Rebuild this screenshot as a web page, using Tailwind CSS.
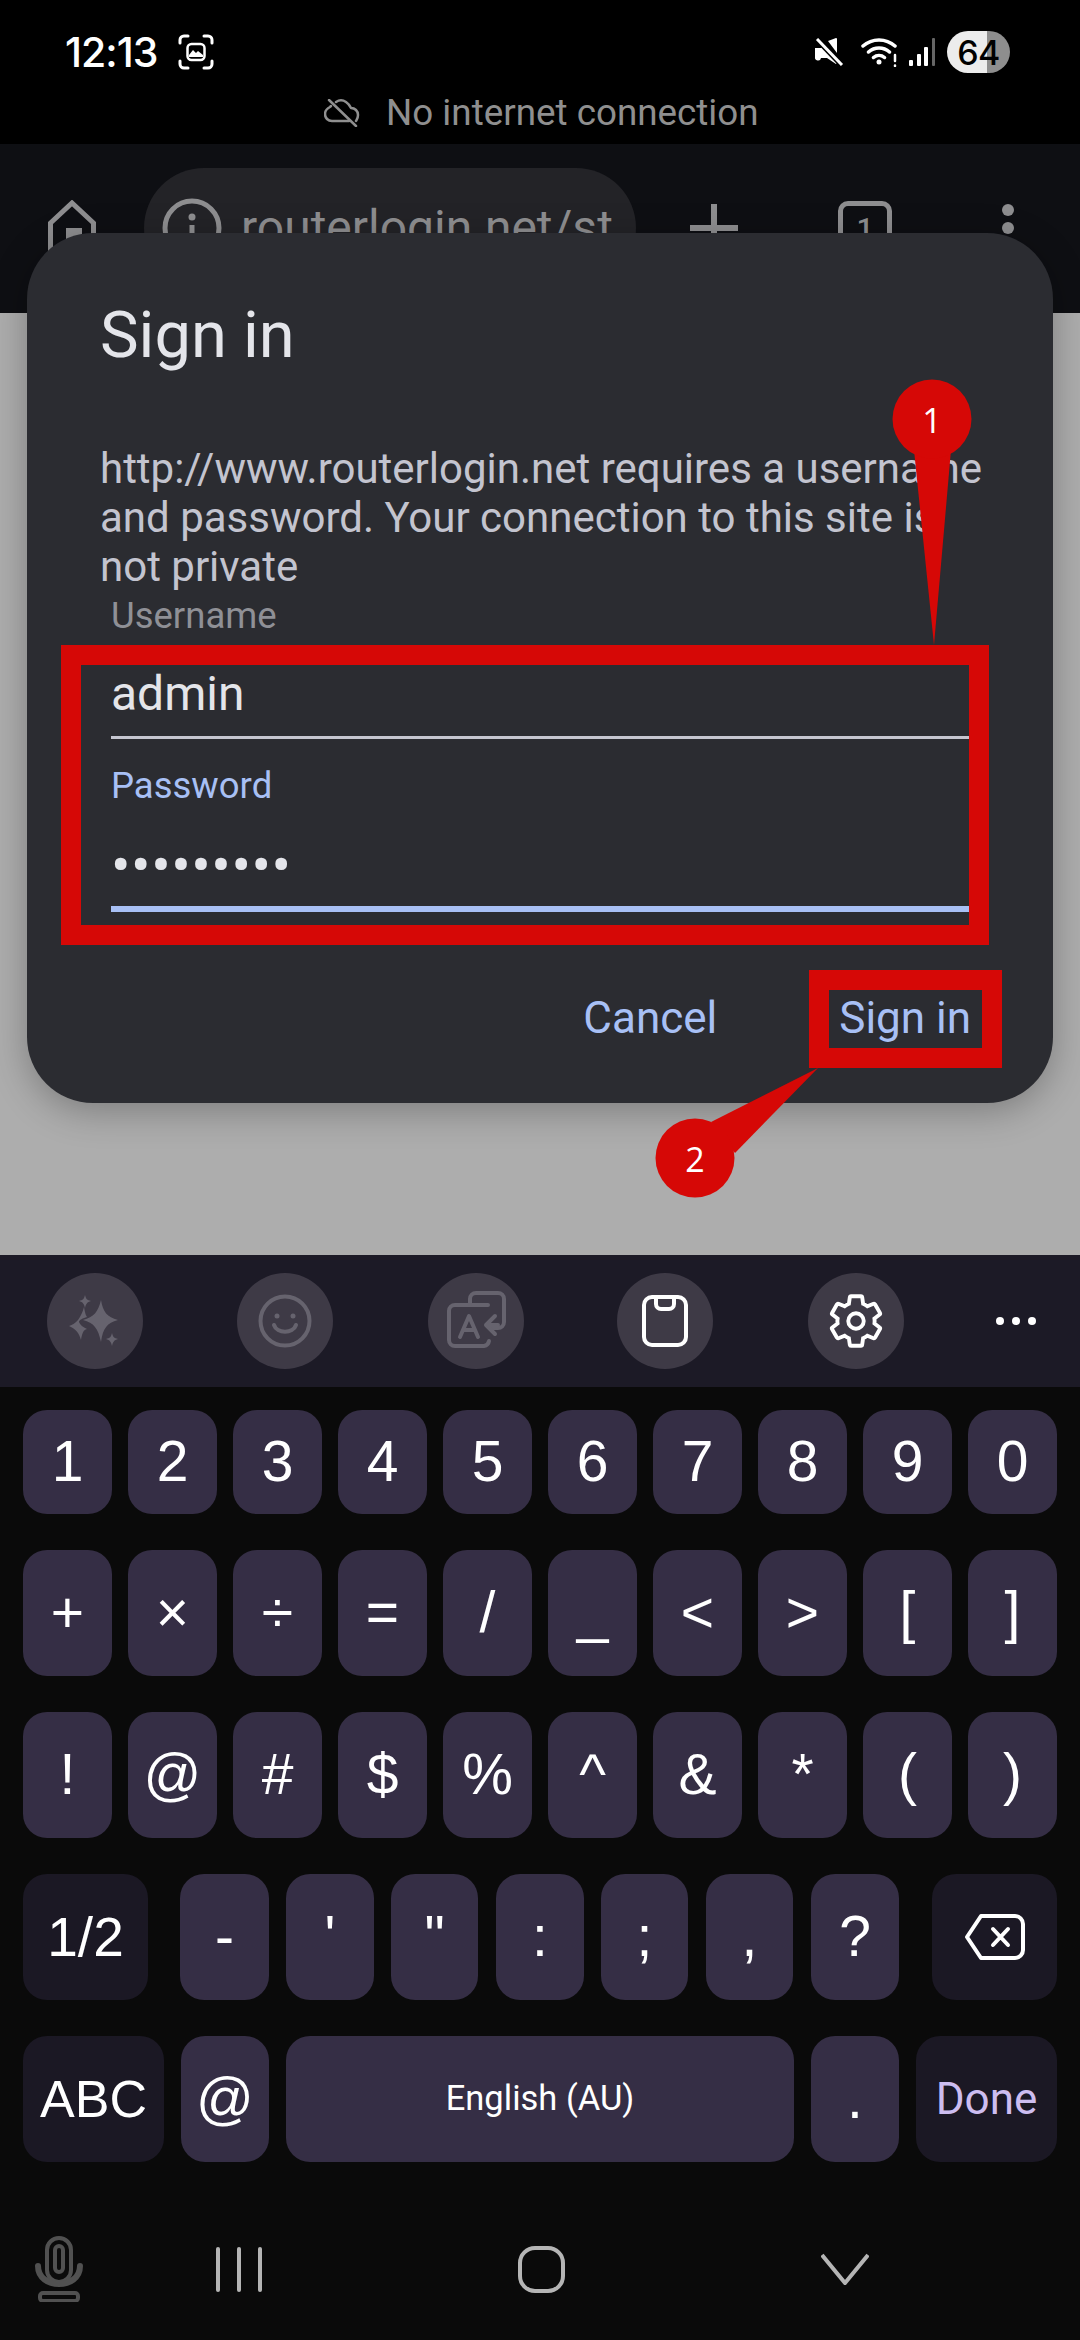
<!DOCTYPE html>
<html lang="en">
<head>
  <meta charset="UTF-8">
  <meta name="viewport" content="width=device-width, initial-scale=1.0">
  <title>Router sign in</title>
  <script src="https://cdn.jsdelivr.net/npm/@tailwindcss/browser@4"></script>
</head>
<body class="bg-black">
<div class="relative w-[1080px] h-[2340px] overflow-hidden flex flex-col font-['Roboto',sans-serif]">

  <!-- status bar -->
  <div class="h-[144px] bg-black pt-[31px]">
    <div class="h-[42px] pl-[65px] pr-[70px] flex items-center text-white">
      <span class="text-[41px] leading-[42px] font-medium font-['Inter',sans-serif] tracking-[-1px]">12:13</span>
      <svg class="ml-[21px]" width="36" height="36" viewBox="0 0 36 36" fill="none" stroke="#fff" stroke-width="3" stroke-linecap="round">
        <path d="M2 9V6a4 4 0 0 1 4-4h4M26 2h4a4 4 0 0 1 4 4v3M34 27v3a4 4 0 0 1-4 4h-4M10 34H6a4 4 0 0 1-4-4v-3"/>
        <rect x="9.5" y="10" width="17" height="16" rx="4" stroke-width="2.5"/>
        <path d="M11 21l4-5 3 3 2-2 5 4v2H11z" fill="#fff" stroke="none"/>
      </svg>
      <svg class="ml-auto" width="30" height="28" viewBox="0 0 30 28" fill="#fff">
        <path d="M1 10h6l3-2 13 13v4l-1 1-9-6H7a1 1 0 0 1-6-1zM14 3l8-3a1 1 0 0 1 1 1v14z"/>
        <path d="M3 1l25 26" stroke="#000" stroke-width="6"/>
        <path d="M3 1l25 26" stroke="#fff" stroke-width="3"/>
      </svg>
      <svg class="ml-[17px]" width="38" height="30" viewBox="0 0 38 30" fill="none" stroke="#fff" stroke-width="3.500" stroke-linecap="round">
        <path d="M2 9a24 24 0 0 1 32 0M7.500 15a16 16 0 0 1 21 0M12.500 20.500a8.500 8.500 0 0 1 11 0"/>
        <circle cx="18" cy="25" r="2.500" fill="#fff" stroke="none"/>
        <path d="M34 18v6M34 28.500v.5" stroke-width="2.500"/>
      </svg>
      <svg class="ml-[9px]" width="28" height="30" viewBox="0 0 28 30" fill="#fff">
        <rect x="1" y="23" width="4" height="6" rx="1"/>
        <rect x="9" y="17" width="4" height="12" rx="1"/>
        <rect x="16" y="10" width="4" height="19" rx="1"/>
        <rect x="24" y="1" width="3" height="28" rx="1" fill="#666"/>
      </svg>
      <div class="ml-[11px] w-[63px] h-[42px] rounded-full bg-[linear-gradient(90deg,#ececec_63%,#8e8e8e_63%)] flex items-center justify-center text-black text-[34px] font-medium font-['Inter',sans-serif] tracking-[-0.5px]">64</div>
    </div>
    <div class="mt-[20px] h-[40px] pl-[324px] flex items-center text-[#8f8f8f]">
      <svg width="36" height="28" viewBox="0 0 36 28" fill="none" stroke="#8f8f8f" stroke-width="2.500" stroke-linecap="round" stroke-linejoin="round">
        <path d="M7 7a8 8 0 0 0-1 1C2 10 1 13 1 15c0 4 3 7 7 7h17M12 3c3-2 7-2 10 0 3 2 4 4 5 6 4 0 7 3 7 7 0 3-1 4-2 6"/>
        <path d="M5 1l27 26"/>
      </svg>
      <span class="ml-[26px] text-[36.800px] leading-[40px]">No internet connection</span>
    </div>
  </div>

  <!-- browser toolbar -->
  <div class="h-[169px] bg-[#0e0f13] pt-[24px] pl-[48px] text-[#8e8e90]">
    <div class="h-[120px] flex items-center">
      <svg width="48" height="56" viewBox="0 0 48 56" fill="none" stroke="#8e8e90" stroke-width="5">
        <path d="M2.500 54V23L24 3l21.500 20v31z"/>
        <path d="M22 54V32h12" stroke-width="8"/>
      </svg>
      <div class="ml-[48px] w-[492px] h-[120px] rounded-[60px] bg-[#232327] pl-[18px] flex items-center">
        <svg width="60" height="60" viewBox="0 0 60 60" fill="none" stroke="#8e8e90" stroke-width="5">
          <circle cx="30" cy="30" r="27"/>
          <circle cx="30" cy="19" r="3.500" fill="#8e8e90" stroke="none"/>
          <path d="M30 27v18"/>
        </svg>
        <span class="ml-[19px] text-[48px] leading-[60px] whitespace-nowrap">routerlogin.net/st</span>
      </div>
      <svg class="ml-[54px]" width="48" height="48" viewBox="0 0 48 48" stroke="#8e8e90" stroke-width="6">
        <path d="M24 0v48M0 24h48"/>
      </svg>
      <div class="ml-[100px] w-[54px] h-[54px] rounded-[10px] border-[5px] border-[#8e8e90] flex items-center justify-center text-[30px] font-medium">1</div>
      <div class="ml-[110px] flex flex-col gap-[6px]">
        <div class="w-[12px] h-[12px] rounded-full bg-[#8e8e90]"></div>
        <div class="w-[12px] h-[12px] rounded-full bg-[#8e8e90]"></div>
        <div class="w-[12px] h-[12px] rounded-full bg-[#8e8e90]"></div>
      </div>
    </div>
  </div>

  <!-- dimmed page behind the dialog -->
  <div class="flex-1 bg-[#adadad]"></div>

  <!-- keyboard -->
  <div class="h-[1085px] bg-[#0a0a0a]">
    <div class="h-[132px] bg-[#1c1a26] flex items-center pl-[47px]">
      <div class="w-[96px] h-[96px] rounded-full bg-[#3e3a46] flex items-center justify-center">
        <svg width="96" height="96" viewBox="0 0 96 96" fill="#66636e">
          <path d="M54 27c2 12 6 17 17 20-11 3-15 8-17 22-3-14-7-19-18-22 11-3 15-8 18-20z"/>
          <path d="M37 34c1 6 2 9 3 10-4 1-8 3-8 5 1 3 4 5 8 7-4 1-5 5-6 11-2-7-5-11-12-14 7-2 12-8 15-19z"/>
          <path d="M38 22c1 4 2 5 6 6-4 1-5 3-6 7-1-4-2-6-6-7 4-1 5-2 6-6zM65 60c1 4 2 5 6 6-4 1-5 3-6 7-1-4-2-6-6-7 4-1 5-2 6-6z"/>
        </svg>
      </div>
      <div class="ml-[94px] w-[96px] h-[96px] rounded-full bg-[#3e3a46] flex items-center justify-center">
        <svg width="56" height="56" viewBox="0 0 56 56" fill="none" stroke="#66636e" stroke-width="4" stroke-linecap="round">
          <circle cx="28" cy="28" r="24.500"/>
          <circle cx="20" cy="23" r="2.500" fill="#66636e" stroke="none"/>
          <circle cx="36" cy="23" r="2.500" fill="#66636e" stroke="none"/>
          <path d="M17 32c3 9 19 9 22 0"/>
        </svg>
      </div>
      <div class="ml-[95px] w-[96px] h-[96px] rounded-full bg-[#3e3a46] flex items-center justify-center">
        <svg width="60" height="60" viewBox="0 0 60 60" fill="none" stroke="#66636e" stroke-width="4" stroke-linecap="round" stroke-linejoin="round">
          <path d="M42 14h-33a6 6 0 0 0-6 6v29a6 6 0 0 0 6 6h29a6 6 0 0 0 5-5"/>
          <path d="M24 13V8a6 6 0 0 1 6-6h22a6 6 0 0 1 6 6v23a6 6 0 0 1-6 6H46"/>
          <path d="M14 46l9-21 9 21M17 39h12"/>
          <path d="M49 25l-9 9 9 9M40 34h12"/>
        </svg>
      </div>
      <div class="ml-[93px] w-[96px] h-[96px] rounded-full bg-[#3e3a46] flex items-center justify-center">
        <svg width="46" height="52" viewBox="0 0 46 52" fill="none" stroke="#fff" stroke-width="4">
          <rect x="2" y="2" width="42" height="48" rx="8"/>
          <path d="M14 2v7a5 5 0 0 0 5 5h8a5 5 0 0 0 5-5V2"/>
        </svg>
      </div>
      <div class="ml-[95px] w-[96px] h-[96px] rounded-full bg-[#3e3a46] flex items-center justify-center">
        <svg width="62" height="62" viewBox="0 0 24 24" fill="none" stroke="#fff" stroke-width="1.500">
          <path d="M19.140 12.940c.04-.3.06-.61.06-.94 0-.32-.02-.64-.07-.94l2.030-1.580c.18-.14.23-.41.12-.61l-1.920-3.320c-.12-.22-.37-.29-.59-.22l-2.390.96c-.5-.38-1.030-.7-1.620-.94l-.36-2.540c-.04-.24-.24-.41-.48-.41h-3.840c-.24 0-.43.17-.47.41l-.36 2.540c-.59.24-1.130.57-1.620.94l-2.390-.96c-.22-.08-.47 0-.59.22L2.740 8.870c-.12.21-.08.47.12.61l2.030 1.580c-.05.3-.09.63-.09.94s.02.64.07.94l-2.030 1.580c-.18.14-.23.41-.12.61l1.920 3.320c.12.22.37.29.59.22l2.390-.96c.5.38 1.030.7 1.620.94l.36 2.540c.05.24.24.41.48.41h3.840c.24 0 .44-.17.47-.41l.36-2.540c.59-.24 1.130-.56 1.620-.94l2.390.96c.22.08.47 0 .59-.22l1.920-3.320c.12-.22.07-.47-.12-.61l-2.010-1.580z"/>
          <circle cx="12" cy="12" r="3"/>
        </svg>
      </div>
      <div class="ml-[92px] flex gap-[8px]">
        <div class="w-[8px] h-[8px] rounded-full bg-white"></div>
        <div class="w-[8px] h-[8px] rounded-full bg-white"></div>
        <div class="w-[8px] h-[8px] rounded-full bg-white"></div>
      </div>
    </div>

    <div class="pt-[23px] px-[23px] flex flex-col gap-[36px] text-white text-[57px] font-['Liberation_Sans',sans-serif]">
      <div class="h-[104px] flex gap-[16px]">
        <div class="flex-1 rounded-[24px] bg-[#352e45] flex items-center justify-center">1</div>
        <div class="flex-1 rounded-[24px] bg-[#352e45] flex items-center justify-center">2</div>
        <div class="flex-1 rounded-[24px] bg-[#352e45] flex items-center justify-center">3</div>
        <div class="flex-1 rounded-[24px] bg-[#352e45] flex items-center justify-center">4</div>
        <div class="flex-1 rounded-[24px] bg-[#352e45] flex items-center justify-center">5</div>
        <div class="flex-1 rounded-[24px] bg-[#352e45] flex items-center justify-center">6</div>
        <div class="flex-1 rounded-[24px] bg-[#352e45] flex items-center justify-center">7</div>
        <div class="flex-1 rounded-[24px] bg-[#352e45] flex items-center justify-center">8</div>
        <div class="flex-1 rounded-[24px] bg-[#352e45] flex items-center justify-center">9</div>
        <div class="flex-1 rounded-[24px] bg-[#352e45] flex items-center justify-center">0</div>
      </div>
      <div class="h-[126px] flex gap-[16px]">
        <div class="flex-1 rounded-[24px] bg-[#352e45] flex items-center justify-center">+</div>
        <div class="flex-1 rounded-[24px] bg-[#352e45] flex items-center justify-center">×</div>
        <div class="flex-1 rounded-[24px] bg-[#352e45] flex items-center justify-center">÷</div>
        <div class="flex-1 rounded-[24px] bg-[#352e45] flex items-center justify-center">=</div>
        <div class="flex-1 rounded-[24px] bg-[#352e45] flex items-center justify-center">/</div>
        <div class="flex-1 rounded-[24px] bg-[#352e45] flex items-center justify-center">_</div>
        <div class="flex-1 rounded-[24px] bg-[#352e45] flex items-center justify-center">&lt;</div>
        <div class="flex-1 rounded-[24px] bg-[#352e45] flex items-center justify-center">&gt;</div>
        <div class="flex-1 rounded-[24px] bg-[#352e45] flex items-center justify-center">[</div>
        <div class="flex-1 rounded-[24px] bg-[#352e45] flex items-center justify-center">]</div>
      </div>
      <div class="h-[126px] flex gap-[16px]">
        <div class="flex-1 rounded-[24px] bg-[#352e45] flex items-center justify-center">!</div>
        <div class="flex-1 rounded-[24px] bg-[#352e45] flex items-center justify-center">@</div>
        <div class="flex-1 rounded-[24px] bg-[#352e45] flex items-center justify-center">#</div>
        <div class="flex-1 rounded-[24px] bg-[#352e45] flex items-center justify-center">$</div>
        <div class="flex-1 rounded-[24px] bg-[#352e45] flex items-center justify-center">%</div>
        <div class="flex-1 rounded-[24px] bg-[#352e45] flex items-center justify-center">^</div>
        <div class="flex-1 rounded-[24px] bg-[#352e45] flex items-center justify-center">&amp;</div>
        <div class="flex-1 rounded-[24px] bg-[#352e45] flex items-center justify-center">*</div>
        <div class="flex-1 rounded-[24px] bg-[#352e45] flex items-center justify-center">(</div>
        <div class="flex-1 rounded-[24px] bg-[#352e45] flex items-center justify-center">)</div>
      </div>
      <div class="h-[126px] flex">
        <div class="w-[125px] rounded-[24px] bg-[#1b1824] flex items-center justify-center text-[55px]">1/2</div>
        <div class="ml-[32px] w-[89px] rounded-[24px] bg-[#352e45] flex items-center justify-center">-</div>
        <div class="ml-[17px] w-[88px] rounded-[24px] bg-[#352e45] flex items-center justify-center">'</div>
        <div class="ml-[17px] w-[87px] rounded-[24px] bg-[#352e45] flex items-center justify-center">"</div>
        <div class="ml-[18px] w-[88px] rounded-[24px] bg-[#352e45] flex items-center justify-center">:</div>
        <div class="ml-[17px] w-[87px] rounded-[24px] bg-[#352e45] flex items-center justify-center">;</div>
        <div class="ml-[18px] w-[87px] rounded-[24px] bg-[#352e45] flex items-center justify-center">,</div>
        <div class="ml-[18px] w-[88px] rounded-[24px] bg-[#352e45] flex items-center justify-center">?</div>
        <div class="ml-[33px] w-[125px] rounded-[24px] bg-[#1b1824] flex items-center justify-center">
          <svg width="60" height="46" viewBox="0 0 60 46" fill="none" stroke="#fff" stroke-width="4" stroke-linejoin="round" stroke-linecap="round">
            <path d="M16 2h34a8 8 0 0 1 8 8v26a8 8 0 0 1-8 8H16L2 23z"/>
            <path d="M28 15l15 16M43 15L28 31"/>
          </svg>
        </div>
      </div>
      <div class="h-[126px] flex">
        <div class="w-[141px] rounded-[24px] bg-[#1b1824] flex items-center justify-center text-[52px]">ABC</div>
        <div class="ml-[17px] w-[88px] rounded-[24px] bg-[#352e45] flex items-center justify-center">@</div>
        <div class="ml-[17px] w-[508px] rounded-[24px] bg-[#352e45] flex items-center justify-center text-[34.500px] font-['Roboto',sans-serif]">English (AU)</div>
        <div class="ml-[17px] w-[88px] rounded-[24px] bg-[#352e45] flex items-center justify-center">.</div>
        <div class="ml-[17px] w-[141px] rounded-[24px] bg-[#1b1824] flex items-center justify-center text-[44px] font-['Roboto',sans-serif] text-[#cdbdf0]">Done</div>
      </div>
    </div>

    <!-- nav bar -->
    <div class="mt-[74px] h-[66px] pl-[34px] flex items-center">
      <svg width="50" height="66" viewBox="0 0 50 66" fill="none" stroke="#515151" stroke-width="4" stroke-linecap="round">
        <rect x="13" y="2" width="24" height="44" rx="12"/>
        <rect x="21" y="10" width="8" height="26" rx="4"/>
        <path d="M4 30c0 24 42 24 42 0" stroke-width="6"/>
        <rect x="6" y="57" width="38" height="8" rx="3"/>
      </svg>
      <div class="ml-[132px] flex gap-[17px]">
        <div class="w-[4px] h-[45px] rounded-full bg-[#b5b5b5]"></div>
        <div class="w-[4px] h-[45px] rounded-full bg-[#b5b5b5]"></div>
        <div class="w-[4px] h-[45px] rounded-full bg-[#b5b5b5]"></div>
      </div>
      <div class="ml-[256px] w-[47px] h-[47px] rounded-[17px] border-[4px] border-[#b5b5b5]"></div>
      <svg class="ml-[256px]" width="48" height="32" viewBox="0 0 48 32" fill="none" stroke="#b5b5b5" stroke-width="4">
        <path d="M1 2l23 28L47 2"/>
      </svg>
    </div>
  </div>

  <!-- sign in dialog, lies over toolbar and page -->
  <div class="absolute left-[27px] top-[233px] w-[1026px] h-[870px] rounded-[66px] bg-[#2b2c31] shadow-[0_8px_36px_rgba(0,0,0,0.28)] pt-[67px] pl-[73px]">
    <h1 class="text-[65px] leading-[70px] text-[#e4e5ea]">Sign in</h1>
    <p class="mt-[74px] w-[930px] text-[42px] leading-[49px] whitespace-nowrap text-[#c3c4cf]">http://www.routerlogin.net requires a username<br>and password. Your connection to this site is<br>not private</p>
    <div class="ml-[11px] w-[860px]">
      <div class="mt-[5px] text-[36.500px] leading-[40px] text-[#8f9096]">Username</div>
      <div class="mt-[28px] text-[48px] leading-[60px] text-[#e4e5ea]">admin</div>
      <div class="mt-[12px] h-[3px] bg-[#c5c6d0]"></div>
      <div class="mt-[27px] text-[36.500px] leading-[40px] text-[#a8c0f5]">Password</div>
      <div class="mt-[34px] text-[58px] leading-[50px] tracking-[0.500px] text-[#e4e5ea]">•••••••••</div>
      <div class="mt-[16px] h-[6px] bg-[#a8c0f5]"></div>
    </div>
    <div class="mt-[76px] pr-[82px] flex justify-end gap-[122px] text-[44px] leading-[60px] text-[#a8c0f5]">
      <span>Cancel</span>
      <span>Sign in</span>
    </div>
  </div>

  <!-- red annotations drawn on top of the screenshot -->
  <div class="absolute left-[61px] top-[645px] w-[928px] h-[300px] border-[20px] border-[#d60806]"></div>
  <div class="absolute left-[809px] top-[970px] w-[193px] h-[98px] border-[20px] border-[#d60806]"></div>
  <svg class="absolute left-0 top-0" width="1080" height="2340" viewBox="0 0 1080 2340" fill="#d60806">
    <path d="M914 450h37l-17 195z"/>
    <circle cx="932" cy="419" r="39.500"/>
    <path d="M818 1068L711 1122l24 31z"/>
    <circle cx="695" cy="1158" r="39.500"/>
    <text x="932" y="433" text-anchor="middle" font-family="Open Sans, sans-serif" font-size="34" fill="#fff">1</text>
    <text x="695" y="1172" text-anchor="middle" font-family="Open Sans, sans-serif" font-size="34" fill="#fff">2</text>
  </svg>
</div>
</body>
</html>
